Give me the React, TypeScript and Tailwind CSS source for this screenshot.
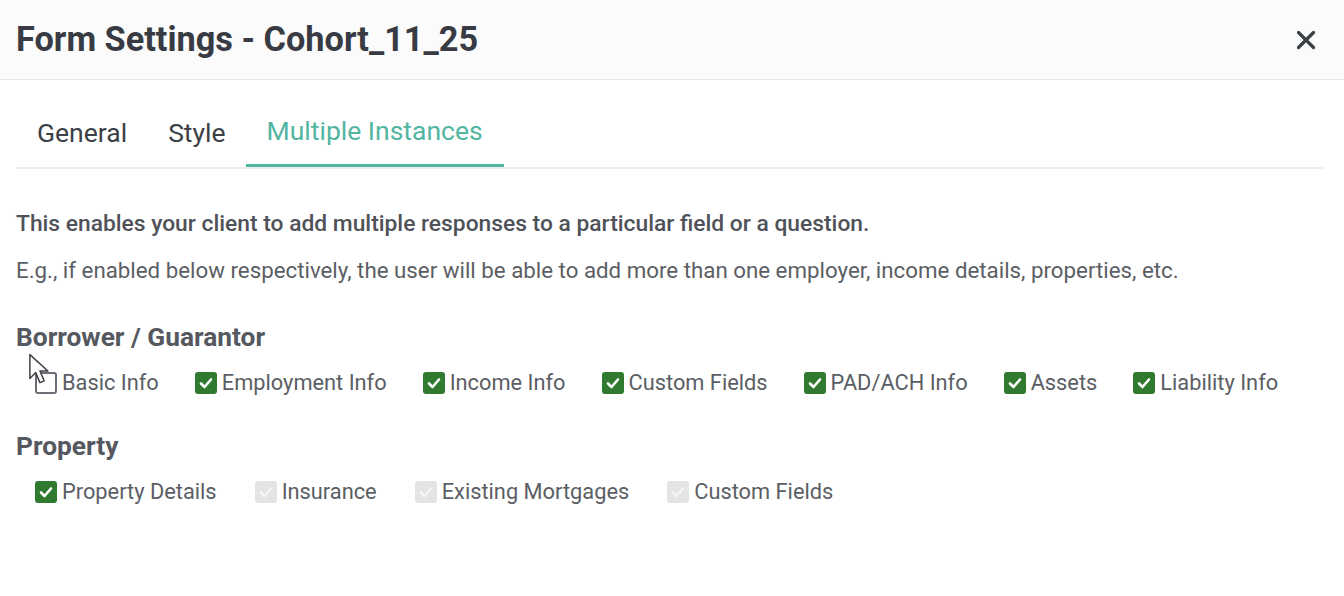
import React from 'react';

type Item = { label: string; state: 'checked' | 'unchecked' | 'disabled' };

const borrowerItems: Item[] = [
  { label: 'Basic Info', state: 'unchecked' },
  { label: 'Employment Info', state: 'checked' },
  { label: 'Income Info', state: 'checked' },
  { label: 'Custom Fields', state: 'checked' },
  { label: 'PAD/ACH Info', state: 'checked' },
  { label: 'Assets', state: 'checked' },
  { label: 'Liability Info', state: 'checked' },
];

const propertyItems: Item[] = [
  { label: 'Property Details', state: 'checked' },
  { label: 'Insurance', state: 'disabled' },
  { label: 'Existing Mortgages', state: 'disabled' },
  { label: 'Custom Fields', state: 'disabled' },
];

const Check = ({ state }: { state: Item['state'] }) => {
  if (state === 'unchecked') {
    return <span className="w-[22px] h-[22px] rounded-[3px] border-2 border-[#6b6e74] bg-white shrink-0" />;
  }
  const box = state === 'checked' ? 'bg-[#2f7a2f]' : 'bg-[#e3e4e6]';
  const tick = state === 'checked' ? '#ffffff' : '#f4f4f5';
  return (
    <span className={`w-[22px] h-[22px] rounded-[3px] ${box} flex items-center justify-center shrink-0`}>
      <svg width="16" height="16" viewBox="0 0 16 16" fill="none">
        <path d="M3 8.5 L6.5 12 L13 4.5" stroke={tick} strokeWidth="2.6" strokeLinecap="round" strokeLinejoin="round" />
      </svg>
    </span>
  );
};

const CheckRow = ({ items, gap }: { items: Item[]; gap: string }) => (
  <div className={`flex items-center pl-[19px] ${gap}`}>
    {items.map((item, i) => (
      <label key={i} className="relative flex items-center gap-[5px] text-[21.8px] leading-[33px] text-[#5b5e64]">
        <Check state={item.state} />
        <span>{item.label}</span>
        {item.label === 'Basic Info' && (
          // mouse pointer sitting over the first box
          <svg className="absolute left-[-7px] top-[-13px]" width="26" height="36" viewBox="0 0 24 34">
            <path d="M1.5 1.5 L1.5 24 L7 18.5 L11 28 L15 26.3 L11 17 L18.5 17 Z" fill="#ffffff" stroke="#3c3f45" strokeWidth="1.4" strokeLinejoin="round" />
          </svg>
        )}
      </label>
    ))}
  </div>
);

export default function App() {
  return (
    <div className="w-[1344px] h-[596px] bg-white overflow-hidden" style={{ fontFamily: 'Roboto, "Liberation Sans", sans-serif' }}>
      <div className="h-[80px] flex items-center justify-between pl-[16px] pr-[28px] bg-[#fbfbfb] border-b border-[#e8e9ec]">
        <h1 className="text-[34.3px] font-bold text-[#383b43]">Form Settings - Cohort_11_25</h1>
        <svg width="20" height="20" viewBox="0 0 20 20">
          <path d="M2.5 2.5 L17.5 17.5 M17.5 2.5 L2.5 17.5" stroke="#3b3f47" strokeWidth="3.2" strokeLinecap="round" />
        </svg>
      </div>

      <div className="pl-[16px] pr-[21px]">
        <div className="flex border-b-2 border-[#eceef0] mt-[18px]">
          <div className="px-[21px] h-[69px] flex items-center text-[26.5px] text-[#3c3f46]">General</div>
          <div className="px-[20px] h-[69px] flex items-center text-[26.5px] text-[#3c3f46]">Style</div>
          <div className="px-[21px] h-[69px] flex items-center text-[26.5px] text-[#52b5a2] border-b-[3px] border-[#52b5a2] mb-[-2px]">Multiple Instances</div>
        </div>

        <p className="mt-[38px] text-[22.8px] leading-[34px] font-medium text-[#4f5258]">This enables your client to add multiple responses to a particular field or a question.</p>
        <p className="mt-[13px] text-[22.3px] leading-[33px] text-[#5b5e64]">E.g., if enabled below respectively, the user will be able to add more than one employer, income details, properties, etc.</p>

        <h2 className="mt-[31px] text-[26.3px] leading-[39px] font-bold text-[#55585e]">Borrower / Guarantor</h2>
        <div className="mt-[9px]">
          <CheckRow items={borrowerItems} gap="gap-[36px]" />
        </div>

        <h2 className="mt-[28px] text-[26.3px] leading-[39px] font-bold text-[#55585e]">Property</h2>
        <div className="mt-[9px]">
          <CheckRow items={propertyItems} gap="gap-[38px]" />
        </div>
      </div>
    </div>
  );
}
